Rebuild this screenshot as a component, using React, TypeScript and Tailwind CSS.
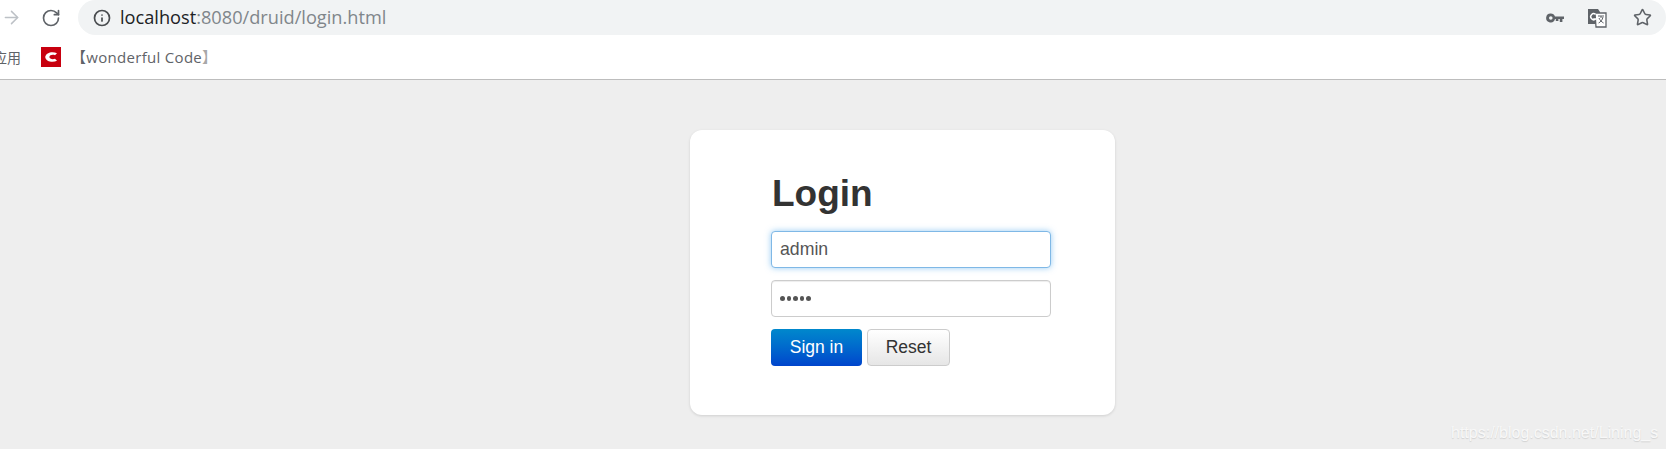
import { ArrowRight, Info, RotateCw, Star } from "lucide-react";

function TranslateIcon() {
  return (
    <svg width="20" height="20" viewBox="0 0 20 20" className="shrink-0">
      <path d="M1 1h10l2 3v12H1z" fill="#5f6368" />
      <path d="M8 5h11v14H9z" fill="#fff" stroke="#5f6368" strokeWidth="1.3" />
      <path d="M11 8h6M14 8v2M16 9c-.6 3-2.4 5-4.4 6M12 10c.8 2 2.6 4 4.6 5" fill="none" stroke="#5f6368" strokeWidth="1" />
      <path d="M8.6 6.4A3 3 0 1 0 8.7 11H6.2" fill="none" stroke="#fff" strokeWidth="1.4" />
    </svg>
  );
}

function KeyIcon() {
  return (
    <svg width="18" height="10" viewBox="0 0 18 10" className="shrink-0">
      <path
        fillRule="evenodd"
        d="M4.8 0.5a4.5 4.5 0 0 1 4.2 3H18v2.6h-1.6V9h-2.6V6.1h-1.4V8H9.8V6.1H9a4.5 4.5 0 1 1-4.2-5.6zM4.8 3.2a1.8 1.8 0 1 0 0 3.6 1.8 1.8 0 0 0 0-3.6z"
        fill="#5f6368"
      />
    </svg>
  );
}

function Toolbar() {
  return (
    <div className="bg-white">
      <div className="flex h-[35px] items-center">
        <ArrowRight className="ml-[1px] h-[21px] w-[21px] text-[#bdc1c6]" strokeWidth={1.7} />
        <RotateCw className="ml-[19px] h-[20px] w-[20px] text-[#5f6368]" strokeWidth={2} />
        <div className="ml-[17px] flex h-[35px] flex-1 items-center rounded-[18px] bg-[#f1f3f4] pl-[15px] pr-[15px]">
          <Info className="h-[18px] w-[18px] text-[#4a4d50]" strokeWidth={2.3} />
          <span className="ml-[9px] text-[18.2px] text-[#202124]" style={{ fontFamily: '"Open Sans", sans-serif' }}>
            localhost<span className="text-[#80868b]">:8080/druid/login.html</span>
          </span>
          <div className="ml-auto mr-[-1px] flex items-center">
            <KeyIcon />
            <div className="ml-[23px]">
              <TranslateIcon />
            </div>
            <Star className="ml-[26px] h-[19px] w-[19px] text-[#5f6368]" strokeWidth={2} />
          </div>
        </div>
      </div>
      <div className="flex h-[45px] items-center border-b border-[#bdbdbd] pt-[1px] text-[15px] tracking-[0.3px] text-[#5f6368]">
        <span className="ml-[-7px] w-[28px] text-[14px] tracking-normal" style={{ fontFamily: '"Noto Sans CJK SC", sans-serif' }}>
          应用
        </span>
        <div className="mb-[1px] ml-[20px] flex h-[20px] w-[20px] items-center justify-center bg-[#c8000f]">
          <svg width="14" height="12" viewBox="0 0 14 12">
            <path d="M13 2.2C9 .2 2 1 1.2 6c.8 5 7.8 5.8 11.8 3.8L11 7.8C8.5 8.6 5.5 8 5.4 6c.1-2 3.1-2.6 5.6-1.8z" fill="#fff" />
          </svg>
        </div>
        <span className="ml-[10px]" style={{ fontFamily: '"Open Sans", "Noto Sans CJK SC", sans-serif' }}>
          【wonderful Code<span className="text-[#a8a8a8]">】</span>
        </span>
      </div>
    </div>
  );
}

function LoginCard() {
  return (
    <div className="ml-[690px] mt-[50px] h-[285px] w-[425px] rounded-[12px] bg-white pl-[81px] pt-[41px] shadow-[0_1px_3px_rgba(0,0,0,0.13)]">
      <h1 className="pl-[1px] text-[37px] font-bold leading-[46px] text-[#333333]">Login</h1>
      <div className="mt-[14px] flex h-[37px] w-[280px] items-center rounded-[4px] border border-[#7fb8e6] bg-white pl-[8px] text-[17.7px] text-[#555555] shadow-[0_0_6px_rgba(82,168,236,0.6)]">
        admin
      </div>
      <div className="mt-[12px] flex h-[37px] w-[280px] items-center rounded-[4px] border border-[#cccccc] bg-white pl-[8px] text-[#555555] shadow-[inset_0_1px_1px_rgba(0,0,0,0.075)]">
        <div className="flex gap-[2px]">
          <span className="h-[4.5px] w-[4.5px] rounded-full bg-[#555555]" />
          <span className="h-[4.5px] w-[4.5px] rounded-full bg-[#555555]" />
          <span className="h-[4.5px] w-[4.5px] rounded-full bg-[#555555]" />
          <span className="h-[4.5px] w-[4.5px] rounded-full bg-[#555555]" />
          <span className="h-[4.5px] w-[4.5px] rounded-full bg-[#555555]" />
        </div>
      </div>
      <div className="mt-[12px] flex gap-[5px]">
        <button className="h-[37px] w-[91px] rounded-[4px] bg-gradient-to-b from-[#0088cc] to-[#0044cc] text-[17.5px] text-white">
          Sign in
        </button>
        <button className="h-[37px] w-[83px] rounded-[4px] border border-[#cccccc] bg-gradient-to-b from-white to-[#e6e6e6] text-[17.5px] text-[#333333]">
          Reset
        </button>
      </div>
    </div>
  );
}

export default function App() {
  return (
    <div
      className="relative h-[449px] w-[1666px] overflow-hidden bg-[#eeeeee]"
      style={{ fontFamily: '"Liberation Sans", Arial, sans-serif' }}
    >
      <Toolbar />
      <LoginCard />
      <span className="absolute left-[1451px] top-[421px] text-[16px] text-[#f8f8f8] [text-shadow:0_1px_1px_rgba(0,0,0,0.12)]">
        https://blog.csdn.net/Lining_s
      </span>
    </div>
  );
}
